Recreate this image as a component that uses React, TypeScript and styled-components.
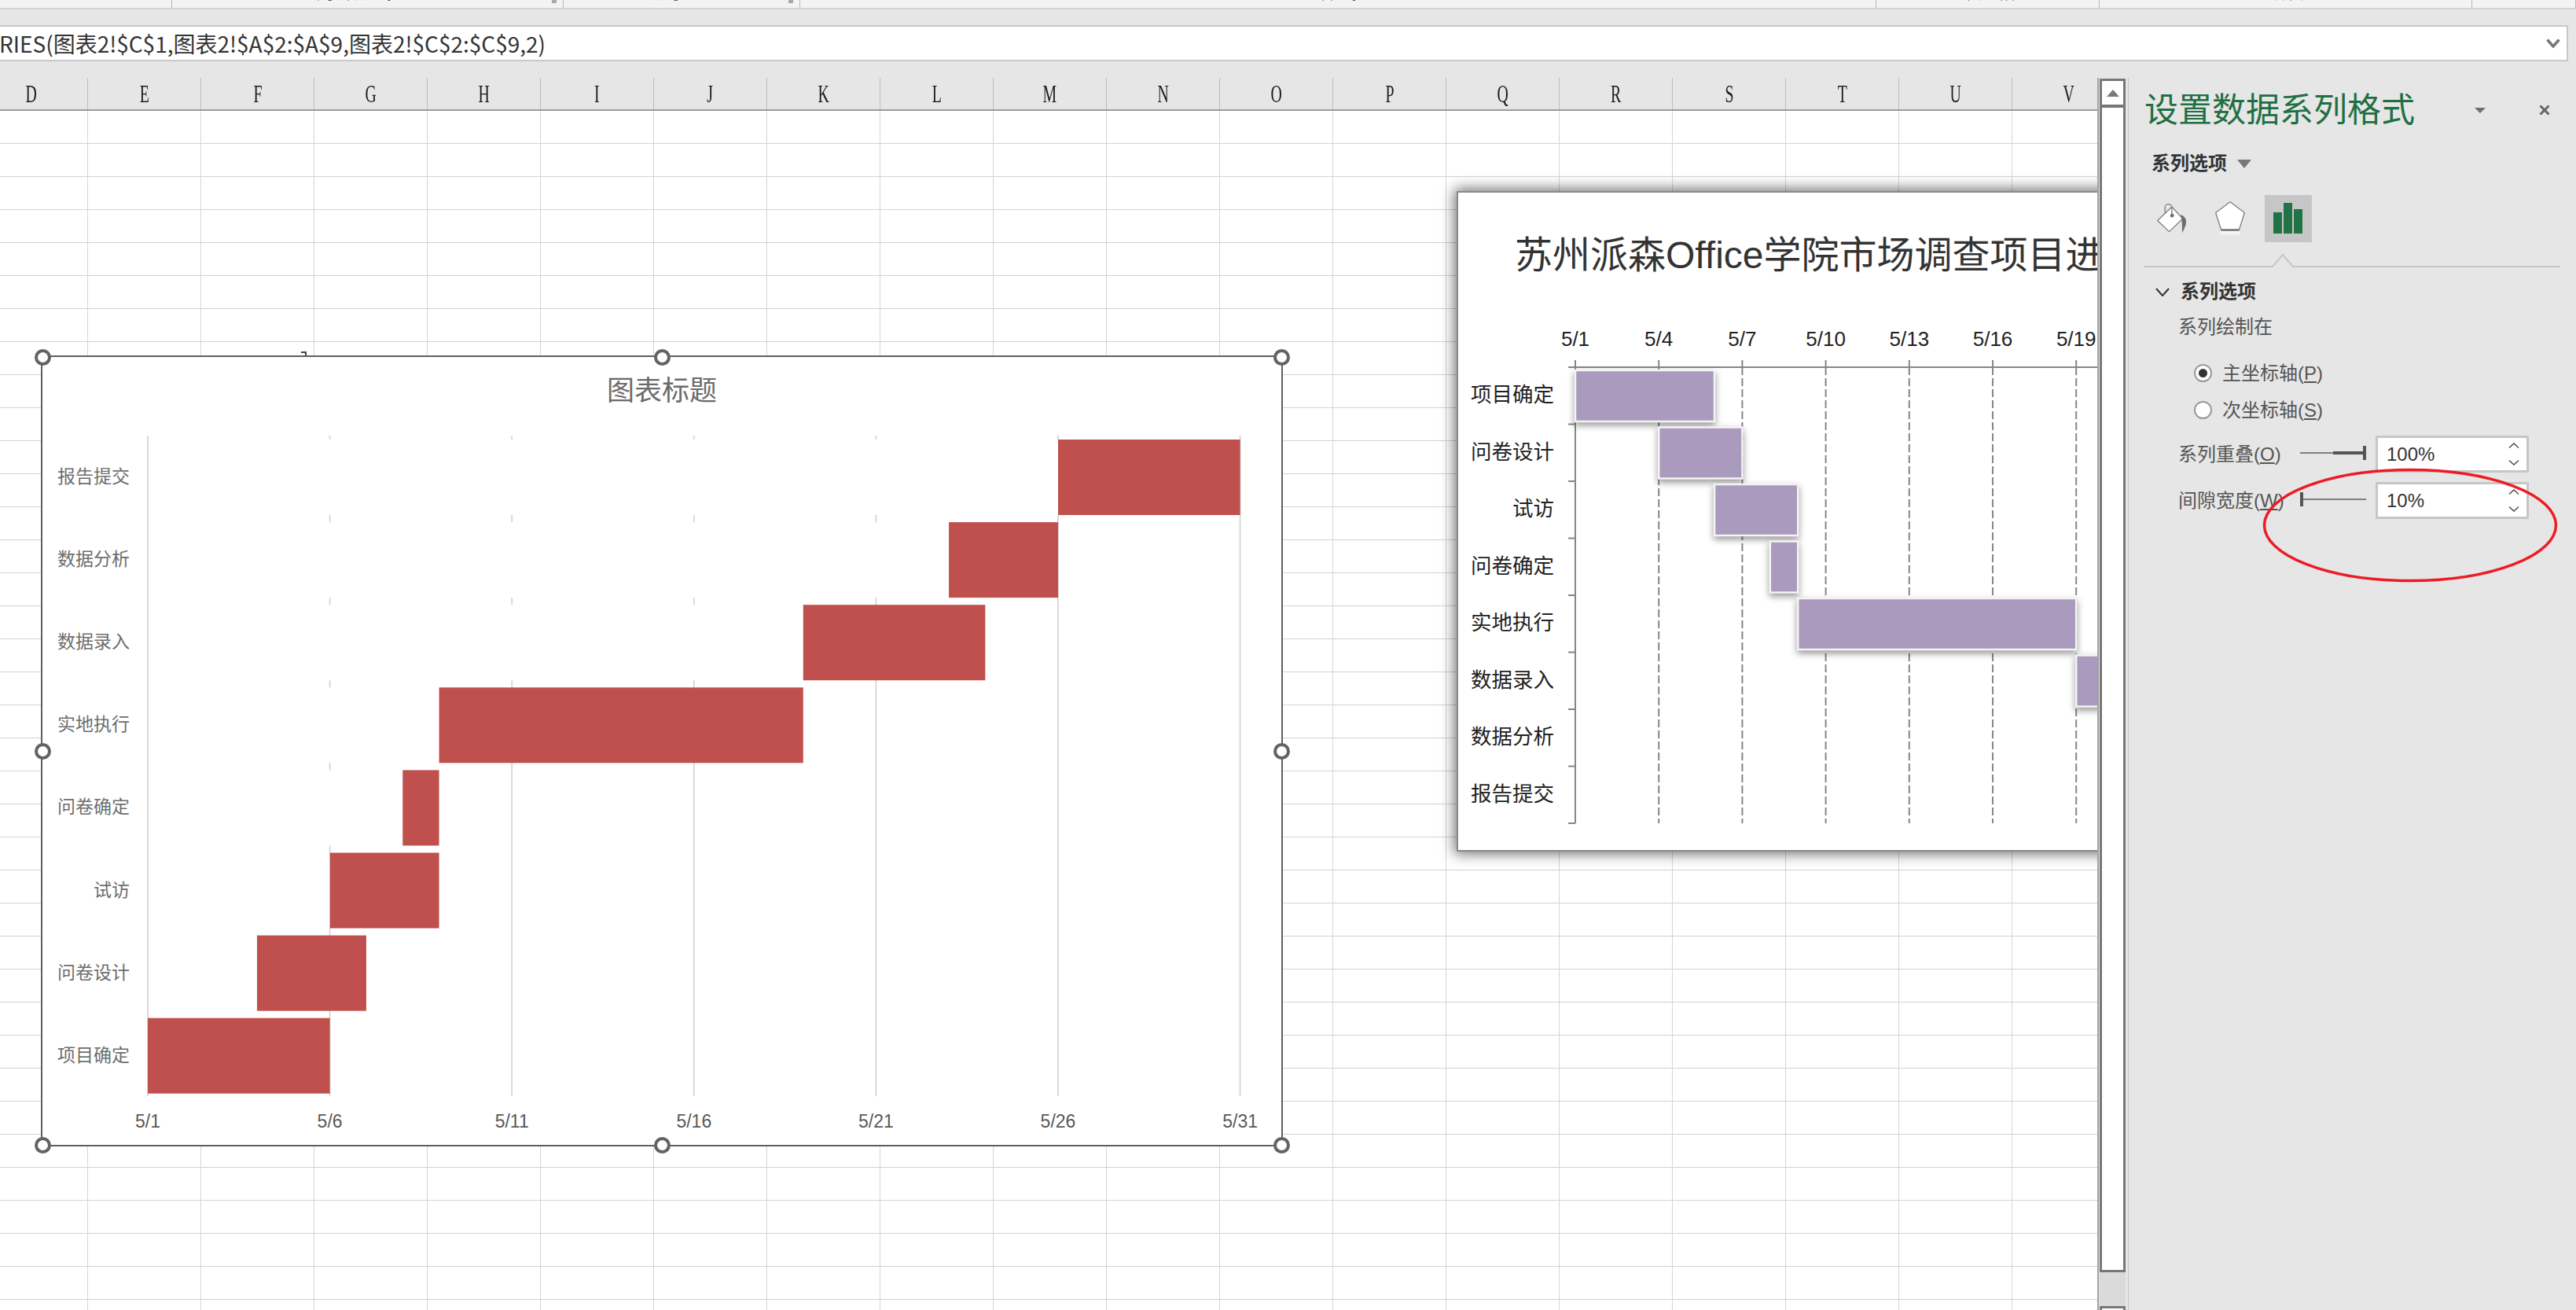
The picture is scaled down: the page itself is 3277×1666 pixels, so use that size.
import styled, { createGlobalStyle } from "styled-components";

const UI_FONT = `"Liberation Sans", "Noto Sans CJK SC", sans-serif`;

const GlobalStyle = createGlobalStyle`
  html, body {
    margin: 0;
    padding: 0;
    background: #e6e6e6;
    overflow: hidden;
    font-family: ${UI_FONT};
  }
  * { box-sizing: border-box; }
`;

const Page = styled.div`
  width: 3277px;
  height: 1666px;
  display: flex;
  flex-direction: column;
  overflow: hidden;
  background: #e6e6e6;
`;

/* ribbon: only the bottom edge of the group labels is still on screen */
const Ribbon = styled.div`
  height: 12px;
  display: flex;
  background: #f3f3f3;
  border-bottom: 2px solid #d2d2d2;
  overflow: hidden;
`;

const RibbonGroup = styled.div<{ $width: number; $launcher?: boolean }>`
  position: relative;
  width: ${(p) => p.$width}px;
  height: 10px;
  display: flex;
  justify-content: center;
  padding-right: ${(p) => (p.$launcher ? 34 : 0)}px;
  border-right: 1px solid #b8b8b8;
`;

const RibbonLabel = styled.span`
  margin-top: -25px;
  font-size: 24px;
  line-height: 30px;
  color: #333;
  white-space: nowrap;
`;

const Launcher = styled.i`
  position: absolute;
  right: 8px;
  top: 0;
  width: 6px;
  height: 4px;
  background: #a8a8a8;
`;

const FormulaStrip = styled.div`
  height: 87px;
  padding: 20px 10px 21px 0;
`;

const FormulaBar = styled.div`
  height: 46px;
  display: flex;
  align-items: center;
  justify-content: space-between;
  background: #fff;
  border: 2px solid #c8c8c8;
  border-left: none;
  padding-right: 8px;
`;

const FormulaText = styled.span`
  margin-left: -1px;
  font-family: "Liberation Sans Narrow", "Noto Sans CJK SC", sans-serif;
  font-size: 28px;
  line-height: 42px;
  color: #333;
  white-space: nowrap;
`;

const Workspace = styled.div`
  flex: 1;
  display: flex;
  min-height: 0;
`;

const SheetArea = styled.div`
  width: 2670px;
  display: flex;
  flex-direction: column;
  border-right: 2px solid #a2a2a2;
  overflow: hidden;
`;

const ColumnHeader = styled.div`
  height: 42px;
  flex: none;
  display: flex;
  margin-left: -32px;
  border-bottom: 2px solid #9b9b9b;
  background: #e6e6e6;
`;

const ColumnCell = styled.div`
  width: 144px;
  flex: none;
  display: flex;
  align-items: center;
  justify-content: center;
  border-right: 1px solid #bdbdbd;
`;

const ColumnLetter = styled.span`
  font-family: "Liberation Serif", serif;
  font-size: 32px;
  line-height: 40px;
  color: #1c1c1c;
  transform: scaleX(0.62);
`;

const SheetBody = styled.div`
  position: relative;
  flex: 1;
  background-color: #fff;
  background-image:
    repeating-linear-gradient(to right, transparent 0 143px, #d6d6d6 143px 144px),
    repeating-linear-gradient(to bottom, transparent 0 41px, #d2d2d2 41px 42px);
  background-size: 100% 100%;
  background-position: -32px 0, 0 0;
  overflow: hidden;
`;

const ChartFrame = styled.div`
  position: absolute;
  left: 52px;
  top: 311px;
  width: 1580px;
  height: 1006px;
  background: #fff;
  border: 2px solid #5f5f5f;
`;

const ChartSvg = styled.svg`
  position: absolute;
  left: -2px;
  top: -2px;
  display: block;
`;

const Handle = styled.span<{ $h: number; $v: number }>`
  position: absolute;
  left: ${(p) => p.$h * 100}%;
  top: ${(p) => p.$v * 100}%;
  width: 21px;
  height: 21px;
  margin: -10.5px 0 0 -10.5px;
  border-radius: 50%;
  background: #fff;
  border: 4px solid #636363;
`;

const StrayMark = styled.i`
  position: absolute;
  left: 383px;
  top: 306px;
  width: 7px;
  height: 5px;
  border-top: 2px solid #444;
  border-right: 2px solid #444;
`;

const GanttCard = styled.div`
  position: absolute;
  left: 1853px;
  top: 102px;
  width: 900px;
  height: 840px;
  background: #fff;
  border: 2px solid #8a8a8a;
  box-shadow: 0 0 16px 3px rgba(0, 0, 0, 0.55);
`;

const ChartText = styled.text<{ $size: number; $color: string }>`
  font-family: ${UI_FONT};
  font-size: ${(p) => p.$size}px;
  fill: ${(p) => p.$color};
  dominant-baseline: central;
`;

const GanttBar = styled.rect`
  fill: #aa9abd;
  stroke: #f4f4f4;
  stroke-width: 2.5px;
  filter: drop-shadow(0 4px 4px rgba(0, 0, 0, 0.4));
`;

const ScrollColumn = styled.div`
  width: 37px;
  flex: none;
  padding: 1px 3px 0 1px;
  display: flex;
  flex-direction: column;
`;

const ScrollButton = styled.div`
  height: 33px;
  flex: none;
  display: flex;
  align-items: center;
  justify-content: center;
  background: #fff;
  border: 3px solid #777;
  border-bottom: none;
`;

const ScrollArrow = styled.i`
  width: 0;
  height: 0;
  border-left: 8px solid transparent;
  border-right: 8px solid transparent;
  border-bottom: 9px solid #7a7a7a;
`;

const ScrollThumb = styled.div`
  height: 1485px;
  flex: none;
  background: #fff;
  border: 3px solid #777;
  border-top-width: 4px;
`;

const ScrollTrack = styled.div`
  flex: 1;
  background: #dadada;
`;

const ScrollFoot = styled.div`
  height: 5px;
  flex: none;
  background: #fff;
  border: 3px solid #777;
  border-bottom: none;
`;

const Pane = styled.aside`
  position: relative;
  flex: 1;
  padding: 13px 20px 0;
  border-left: 1px solid #c6c6c6;
  background: #e6e6e6;
  color: #333;
`;

const PaneHeader = styled.div`
  height: 56px;
  display: flex;
  align-items: center;
`;

const PaneTitle = styled.h2`
  margin: 0;
  font-size: 43px;
  line-height: 56px;
  font-weight: 400;
  color: #1f6f43;
  white-space: nowrap;
`;

const PaneMenuCaret = styled.i`
  margin: 0 68px 0 auto;
  width: 0;
  height: 0;
  border-left: 7px solid transparent;
  border-right: 7px solid transparent;
  border-top: 7px solid #707070;
`;

const CloseIcon = styled.svg`
  margin-right: 13px;
  display: block;
`;

const OptionSwitch = styled.div`
  margin-top: 25px;
  height: 30px;
  padding-left: 9px;
  display: flex;
  align-items: center;
  gap: 13px;
`;

const StrongLabel = styled.span`
  font-size: 24px;
  line-height: 30px;
  font-weight: 700;
  color: #333;
  white-space: nowrap;
`;

const SwitchCaret = styled.i`
  width: 0;
  height: 0;
  border-left: 9px solid transparent;
  border-right: 9px solid transparent;
  border-top: 11px solid #777;
`;

const ToolRow = styled.div`
  margin: 25px 0 0 5px;
  display: flex;
  gap: 14px;
`;

const ToolButton = styled.div<{ $active?: boolean }>`
  width: 60px;
  height: 60px;
  display: flex;
  align-items: center;
  justify-content: center;
  background: ${(p) => (p.$active ? "#c6c6c6" : "transparent")};
`;

const NotchedRule = styled.svg`
  display: block;
  margin: 15px 0 0 -1px;
`;

const SectionHead = styled.div`
  margin-top: 15px;
  height: 30px;
  padding-left: 14px;
  display: flex;
  align-items: center;
  gap: 14px;
`;

const PlainLabel = styled.span`
  font-size: 24px;
  line-height: 30px;
  color: #555;
  white-space: nowrap;

  u {
    text-underline-offset: 2px;
  }
`;

const PlotOnLabel = styled(PlainLabel)`
  display: block;
  margin: 15px 0 0 43px;
`;

const RadioGroup = styled.div`
  margin: 20px 0 9px 63px;
  display: flex;
  flex-direction: column;
`;

const RadioRow = styled.div`
  height: 47px;
  display: flex;
  align-items: center;
  gap: 13px;
`;

const RadioMark = styled.span<{ $checked?: boolean }>`
  width: 23px;
  height: 23px;
  flex: none;
  display: flex;
  align-items: center;
  justify-content: center;
  border-radius: 50%;
  background: #fff;
  border: 2px solid #9a9a9a;

  &::after {
    content: "";
    width: 11px;
    height: 11px;
    border-radius: 50%;
    background: ${(p) => (p.$checked ? "#333" : "transparent")};
  }
`;

const FieldRow = styled.div`
  margin: 0 0 12px 43px;
  height: 47px;
  display: flex;
  align-items: center;
`;

const FieldLabel = styled(PlainLabel)`
  width: 155px;
  flex: none;
`;

const Slider = styled.div`
  width: 84px;
  height: 18px;
  flex: none;
  margin: -3px 12px 0 0;
  display: flex;
  align-items: center;
`;

const SliderLine = styled.i<{ $thick?: boolean }>`
  flex: ${(p) => (p.$thick ? "none" : 1)};
  width: ${(p) => (p.$thick ? "38px" : "auto")};
  height: ${(p) => (p.$thick ? 4 : 2)}px;
  background: ${(p) => (p.$thick ? "#555" : "#808080")};
`;

const SliderThumb = styled.i`
  width: 4px;
  height: 18px;
  flex: none;
  background: #555;
`;

const NumberBox = styled.div`
  width: 195px;
  height: 47px;
  flex: none;
  display: flex;
  align-items: center;
  justify-content: space-between;
  padding: 0 9px 0 11px;
  background: #fff;
  border: 3px solid #c6c6c6;
  font-size: 24px;
  line-height: 30px;
  color: #333;
`;

const Spinner = styled.div`
  display: flex;
  flex-direction: column;
  gap: 15px;
`;

const Callout = styled.svg`
  position: absolute;
  left: 170px;
  top: 496px;
  display: block;
  pointer-events: none;
`;

const ribbonGroups = [
  { width: 219 },
  { width: 498, label: "对齐方式", launcher: true },
  { width: 301, label: "数字", launcher: true },
  { width: 1369, label: "样式" },
  { width: 284, label: "单元格" },
  { width: 474, label: "编辑" },
  { width: 132 },
];

const columns = "DEFGHIJKLMNOPQRSTUV".split("");

const tasks = [
  { name: "项目确定", start: 0, days: 5 },
  { name: "问卷设计", start: 3, days: 3 },
  { name: "试访", start: 5, days: 3 },
  { name: "问卷确定", start: 7, days: 1 },
  { name: "实地执行", start: 8, days: 10 },
  { name: "数据录入", start: 18, days: 5 },
  { name: "数据分析", start: 22, days: 3 },
  { name: "报告提交", start: 25, days: 5 },
];

const handles: [number, number][] = [
  [0, 0], [0.5, 0], [1, 0],
  [0, 0.5], [1, 0.5],
  [0, 1], [0.5, 1], [1, 1],
];

function SelectedChart() {
  const dayX = (d: number) => 188 + d * 46.32;
  const rowY = (i: number) => 559 + (7 - i) * 105.1;
  const ticks = [0, 5, 10, 15, 20, 25, 30];
  return (
    <ChartFrame>
      {/* viewBox in page pixels so the numbers read against the screenshot */}
      <ChartSvg width={1580} height={1006} viewBox="52 452 1580 1006">
        <ChartText $size={35} $color="#6b6b6b" x={842} y={496} textAnchor="middle">
          图表标题
        </ChartText>
        {ticks.slice(1).map((d) => (
          <line key={d} x1={dayX(d)} x2={dayX(d)} y1={554} y2={1394} stroke="#d9d9d9" strokeWidth={2} />
        ))}
        {tasks.map((t, i) => (
          <rect key={t.name} x={188} y={rowY(i)} width={dayX(t.start) - 188} height={96} fill="#fff" />
        ))}
        <line x1={188} x2={188} y1={554} y2={1394} stroke="#d9d9d9" strokeWidth={2} />
        {tasks.map((t, i) => (
          <rect key={t.name} x={dayX(t.start)} y={rowY(i)} width={t.days * 46.32} height={96} fill="#c0504d" />
        ))}
        {tasks.map((t, i) => (
          <ChartText key={t.name} $size={23} $color="#6e6e6e" x={165} y={rowY(i) + 47} textAnchor="end">
            {t.name}
          </ChartText>
        ))}
        {ticks.map((d) => (
          <ChartText key={d} $size={23} $color="#595959" x={dayX(d)} y={1426} textAnchor="middle">
            5/{d + 1}
          </ChartText>
        ))}
      </ChartSvg>
      {handles.map(([h, v]) => (
        <Handle key={`${h}-${v}`} $h={h} $v={v} />
      ))}
    </ChartFrame>
  );
}

function GanttChart() {
  const dayX = (d: number) => 2004 + d * 35.4;
  const rowY = (i: number) => 467 + i * 72.5;
  const ticks = [0, 3, 6, 9, 12, 15, 18];
  return (
    <GanttCard>
      <ChartSvg width={900} height={840} viewBox="1853 243 900 840">
        <ChartText $size={48} $color="#333" x={1927} y={324}>
          苏州派森Office学院市场调查项目进
        </ChartText>
        {ticks.map((d) => (
          <ChartText key={d} $size={26} $color="#222" x={dayX(d)} y={431} textAnchor="middle">
            5/{d + 1}
          </ChartText>
        ))}
        {ticks.slice(1).map((d) => (
          <g key={d}>
            <line x1={dayX(d)} x2={dayX(d)} y1={458} y2={467} stroke="#868686" strokeWidth={2} />
            <line
              x1={dayX(d)}
              x2={dayX(d)}
              y1={467}
              y2={1047}
              stroke="#868686"
              strokeWidth={2}
              strokeDasharray="10 4"
            />
          </g>
        ))}
        <line x1={2004} x2={2004} y1={458} y2={1047} stroke="#868686" strokeWidth={2} />
        <line x1={1995} x2={2760} y1={467} y2={467} stroke="#868686" strokeWidth={2} />
        {tasks.map((t, i) => (
          <line key={t.name} x1={1995} x2={2004} y1={rowY(i + 1)} y2={rowY(i + 1)} stroke="#868686" strokeWidth={2} />
        ))}
        {tasks.map((t, i) => (
          <GanttBar key={t.name} x={dayX(t.start)} y={rowY(i) + 4} width={t.days * 35.4} height={65} />
        ))}
        {tasks.map((t, i) => (
          <ChartText key={t.name} $size={26.5} $color="#222" x={1977} y={rowY(i) + 35} textAnchor="end">
            {t.name}
          </ChartText>
        ))}
      </ChartSvg>
    </GanttCard>
  );
}

function BucketIcon() {
  return (
    <svg width={42} height={42} viewBox="40 55 125 125">
      <path d="M48 125 L102 73 L143 118 L92 167 Z" fill="#fff" stroke="#808080" strokeWidth={4} strokeLinejoin="round" />
      <path d="M76 100 V76 A13 13 0 0 1 102 76 V105" fill="none" stroke="#808080" strokeWidth={4} />
      <circle cx={103} cy={106} r={7} fill="#6e6e6e" />
      <path d="M136 102 C150 108 160 122 155 140 C152 152 146 160 142 172 C140 158 142 142 140 128 Z" fill="#6e6e6e" />
    </svg>
  );
}

function PentagonIcon() {
  return (
    <svg width={40} height={47} viewBox="260 44 120 140">
      <defs>
        <linearGradient id="pentagonFade" x1="0" y1="0" x2="0" y2="1">
          <stop offset="0" stopColor="#fff" />
          <stop offset="1" stopColor="#fff" stopOpacity="0" />
        </linearGradient>
      </defs>
      <path d="M286 158 L354 158 L362 180 L278 180 Z" fill="url(#pentagonFade)" />
      <path d="M320 49 L375 90 L354 156 L286 156 L265 90 Z" fill="#fff" stroke="#808080" strokeWidth={4} strokeLinejoin="round" />
      <path d="M286 156 H354" stroke="#6e6e6e" strokeWidth={7} />
    </svg>
  );
}

function BarsIcon() {
  return (
    <svg width={38} height={40} viewBox="0 0 38 40">
      <rect x={0} y={12} width={11} height={27} fill="#217346" />
      <rect x={13} y={0} width={11} height={39} fill="#217346" />
      <rect x={26} y={8} width={11} height={31} fill="#217346" />
    </svg>
  );
}

function SpinChevron({ up }: { up?: boolean }) {
  return (
    <svg width={14} height={7} viewBox="0 0 14 7" style={{ display: "block" }}>
      <path d={up ? "M1 6.5 L7 1 L13 6.5" : "M1 0.5 L7 6 L13 0.5"} fill="none" stroke="#444" strokeWidth={1.3} />
    </svg>
  );
}

function SpinBox({ value }: { value: string }) {
  return (
    <NumberBox>
      <span>{value}</span>
      <Spinner>
        <SpinChevron up />
        <SpinChevron />
      </Spinner>
    </NumberBox>
  );
}

function FormatPane() {
  return (
    <Pane>
      <PaneHeader>
        <PaneTitle>设置数据系列格式</PaneTitle>
        <PaneMenuCaret />
        <CloseIcon width={14} height={14} viewBox="0 0 14 14">
          <path d="M1.5 1.5 L12.5 12.5 M12.5 1.5 L1.5 12.5" stroke="#666" strokeWidth={3} />
        </CloseIcon>
      </PaneHeader>
      <OptionSwitch>
        <StrongLabel>系列选项</StrongLabel>
        <SwitchCaret />
      </OptionSwitch>
      <ToolRow>
        <ToolButton>
          <BucketIcon />
        </ToolButton>
        <ToolButton>
          <PentagonIcon />
        </ToolButton>
        <ToolButton $active>
          <BarsIcon />
        </ToolButton>
      </ToolRow>
      <NotchedRule width={530} height={18} viewBox="0 0 530 18">
        <path d="M0 16 H164 L177 1 L190 16 H530" fill="none" stroke="#c6c6c6" strokeWidth={2} />
      </NotchedRule>
      <SectionHead>
        <svg width={18} height={11} viewBox="0 0 18 11">
          <path d="M1 1 L9 10 L17 1" fill="none" stroke="#333" strokeWidth={2} />
        </svg>
        <StrongLabel>系列选项</StrongLabel>
      </SectionHead>
      <PlotOnLabel>系列绘制在</PlotOnLabel>
      <RadioGroup>
        <RadioRow>
          <RadioMark $checked />
          <PlainLabel>
            主坐标轴(<u>P</u>)
          </PlainLabel>
        </RadioRow>
        <RadioRow>
          <RadioMark />
          <PlainLabel>
            次坐标轴(<u>S</u>)
          </PlainLabel>
        </RadioRow>
      </RadioGroup>
      <FieldRow>
        <FieldLabel>
          系列重叠(<u>O</u>)
        </FieldLabel>
        <Slider>
          <SliderLine />
          <SliderLine $thick />
          <SliderThumb />
        </Slider>
        <SpinBox value="100%" />
      </FieldRow>
      <FieldRow>
        <FieldLabel>
          间隙宽度(<u>W</u>)
        </FieldLabel>
        <Slider>
          <SliderThumb />
          <SliderLine />
        </Slider>
        <SpinBox value="10%" />
      </FieldRow>
      <Callout width={376} height={146} viewBox="0 0 376 146">
        <ellipse cx={188} cy={73} rx={185.5} ry={70.5} fill="none" stroke="#ed1c24" strokeWidth={3.5} />
      </Callout>
    </Pane>
  );
}

export default function App() {
  return (
    <Page>
      <GlobalStyle />
      <Ribbon>
        {ribbonGroups.map((g, i) => (
          <RibbonGroup key={i} $width={g.width} $launcher={g.launcher}>
            {g.label && <RibbonLabel>{g.label}</RibbonLabel>}
            {g.launcher && <Launcher />}
          </RibbonGroup>
        ))}
      </Ribbon>
      <FormulaStrip>
        <FormulaBar>
          <FormulaText>RIES(图表2!$C$1,图表2!$A$2:$A$9,图表2!$C$2:$C$9,2)</FormulaText>
          <svg width={18} height={12} viewBox="0 0 18 12">
            <path d="M1.5 1.5 L9 10 L16.5 1.5" fill="none" stroke="#777" strokeWidth={3.5} />
          </svg>
        </FormulaBar>
      </FormulaStrip>
      <Workspace>
        <SheetArea>
          <ColumnHeader>
            {columns.map((c) => (
              <ColumnCell key={c}>
                <ColumnLetter>{c}</ColumnLetter>
              </ColumnCell>
            ))}
          </ColumnHeader>
          <SheetBody>
            <StrayMark />
            <SelectedChart />
            <GanttChart />
          </SheetBody>
        </SheetArea>
        <ScrollColumn>
          <ScrollButton>
            <ScrollArrow />
          </ScrollButton>
          <ScrollThumb />
          <ScrollTrack />
          <ScrollFoot />
        </ScrollColumn>
        <FormatPane />
      </Workspace>
    </Page>
  );
}
